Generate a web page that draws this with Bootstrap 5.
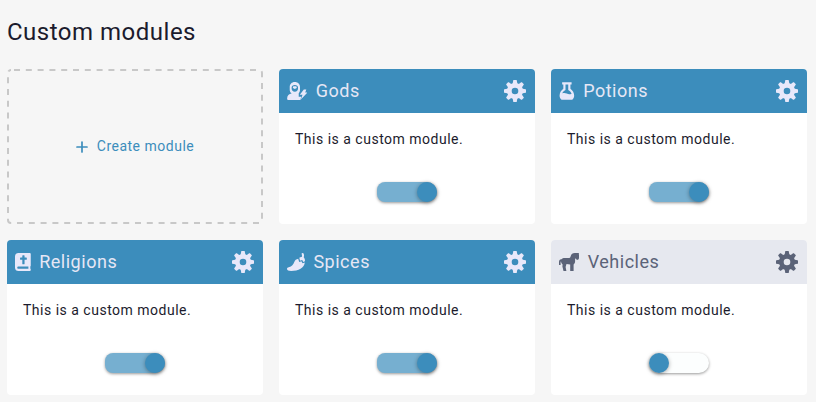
<!DOCTYPE html>
<html lang="en">
<head>
<meta charset="utf-8">
<meta name="viewport" content="width=device-width, initial-scale=1">
<title>Custom modules</title>
<link href="https://cdn.jsdelivr.net/npm/bootstrap@5.3.0/dist/css/bootstrap.min.css" rel="stylesheet">
<style>
body{background:#f6f6f6;color:#1b1b2d;font-family:Roboto,"Liberation Sans",sans-serif;font-size:14px;letter-spacing:.5px;overflow:hidden}
.page{padding:14px 9px 0 7px}
.title{font-size:24px;line-height:36px;letter-spacing:.5px;font-weight:400;margin-bottom:19px}
.modules{display:grid;grid-template-columns:repeat(3,256px);grid-auto-rows:155px;gap:16px}
.create{color:#3c8dbc;border-radius:4px;position:relative}
.create:hover{color:#2f78a3}
.create .outline{position:absolute;inset:0;width:256px;height:155px}
.create .plus{margin-right:9px}
.module{border-radius:4px;border:0;background:#fff;color:inherit;overflow:hidden}
.module-head{height:44px;background:#3c8dbc;color:#e6e7f5;padding:0 8px;font-size:18px}
.module-head h2{font-size:18px;line-height:24px;font-weight:400;letter-spacing:.52px;margin:0 0 0 .4px}
.module-head svg{fill:#e8e8fa;height:18px;flex:none}
.module-head svg.cog{width:24px;height:24px}
.module.off .module-head{background:#e6e8ef;color:#5b6378}
.module.off svg{fill:#5b6378}
.module-text{line-height:21px;padding:16px 16px 0;margin-bottom:32px}
.toggle{width:60px;height:20px;border-radius:8px 10px 10px 8px;background:#76afd0;box-shadow:0 1px 3px rgba(0,0,0,.4);border:0;padding:0}
.knob{width:20px;height:20px;border-radius:50%;background:#3c8dbc;box-shadow:0 1px 4px rgba(0,0,0,.35)}
.off .toggle{background:#fcfefe;border-radius:10px}
</style>
</head>
<body>
<svg class="d-none">
<symbol id="cog" viewBox="0 0 24 24">
<path fill-rule="evenodd" d="M12 4a8 8 0 1 0 0 16 8 8 0 0 0 0-16zM12 8.700a3.300 3.300 0 1 1 0 6.600 3.300 3.300 0 0 1 0-6.600z"/>
<g id="teeth"><path id="tooth" d="M9.500 5.500 10.200 1.500q.1-.5.600-.5h2.400q.5 0 .6.500l.7 4z"/><use href="#tooth" transform="rotate(45 12 12)"/><use href="#tooth" transform="rotate(90 12 12)"/><use href="#tooth" transform="rotate(135 12 12)"/></g>
<use href="#teeth" transform="rotate(180 12 12)"/>
</symbol>
</svg>
<main class="page">
<h1 class="title">Custom modules</h1>
<div class="modules">
  <a href="#" class="create d-flex align-items-center justify-content-center text-decoration-none">
    <svg class="outline" viewBox="0 0 256 155"><rect x="1" y="1" width="254" height="153" rx="3" fill="none" stroke="#c8c8c8" stroke-width="2" stroke-dasharray="6 5.8" stroke-dashoffset="-3"/></svg>
    <svg class="plus" width="12" height="12" viewBox="0 0 12 12" fill="none" stroke="#3c8dbc" stroke-width="1.7" stroke-linecap="round"><path d="M6 1v10M1 6h10"/></svg>
    <span>Create module</span>
  </a>
  <section class="card module">
    <header class="module-head d-flex align-items-center gap-2">
      <svg width="20.25" viewBox="0 0 20 18"><path fill-rule="evenodd" d="M7.700 0C4.500 0 2.600 2.200 2.600 5.200v2.500c0 1.700.7 2.900 1.900 3.800C1.900 11.800 0 13.800 0 16.400c0 .9.600 1.600 1.500 1.600h11.800l.8-3.200h-2.500v-3.600c.8-.9 1.300-2 1.300-3.500V5.200c0-3-2-5.200-5.200-5.200zM4.500 5.600C4.500 4 5.700 3 7.700 3s3.200 1 3.200 2.600v.7c0 2.200-1.200 3.400-3.200 3.400S4.500 8.500 4.500 6.300zM5.800 5.100c0-.5.4-.8.9-.8h2c.5 0 .9.300.9.800v1l-1.900.8-1.900-.8z"/><path d="M16.700 7.500h2.500l-1.100 3h2.200l-6.600 6.900 1.700-4.700h-2.700z"/></svg>
      <h2>Gods</h2><svg class="cog ms-auto"><use href="#cog"/></svg>
    </header>
    <p class="module-text">This is a custom module.</p>
    <button class="toggle d-flex justify-content-end mx-auto" aria-label="Gods enabled"><span class="knob"></span></button>
  </section>
  <section class="card module">
    <header class="module-head d-flex align-items-center gap-2">
      <svg width="15.75" viewBox="0 0 16 18"><path fill-rule="evenodd" d="M3.200 0h9.600v2.300h-1.200v4.300c2.400 1.800 3.800 4.300 3.800 7.100 0 1.700-.8 3.200-2 4.300H2.600c-1.200-1.100-2-2.600-2-4.300 0-2.800 1.400-5.300 3.800-7.100V2.300H3.200zM6.600 2.300v5.600c-1.700.8-2.800 2-3.400 3.500 1.600-.6 3.100-.6 4.700.2 1.700.8 3.200.8 4.900.1-.7-1.600-1.800-3-3.400-3.800V2.300z"/></svg>
      <h2>Potions</h2><svg class="cog ms-auto"><use href="#cog"/></svg>
    </header>
    <p class="module-text">This is a custom module.</p>
    <button class="toggle d-flex justify-content-end mx-auto" aria-label="Potions enabled"><span class="knob"></span></button>
  </section>
  <section class="card module">
    <header class="module-head d-flex align-items-center gap-2">
      <svg width="15.75" viewBox="0 0 448 512"><path d="M448 358.400V25.600c0-16-9.600-25.600-25.600-25.600H96C41.600 0 0 41.600 0 96v320c0 54.400 41.600 96 96 96h326.400c12.800 0 25.600-9.600 25.600-25.600v-16c0-6.400-3.200-12.800-9.600-19.200-3.200-16-3.200-60.800 0-73.600 6.400-3.200 9.600-9.600 9.600-19.200zM144 144c0-8.840 7.160-16 16-16h48V80c0-8.840 7.160-16 16-16h32c8.840 0 16 7.160 16 16v48h48c8.840 0 16 7.160 16 16v32c0 8.840-7.160 16-16 16h-48v112c0 8.840-7.160 16-16 16h-32c-8.840 0-16-7.160-16-16V192h-48c-8.840 0-16-7.160-16-16v-32zm236.800 304H96c-19.200 0-32-12.800-32-32s16-32 32-32h284.800v64z"/></svg>
      <h2>Religions</h2><svg class="cog ms-auto"><use href="#cog"/></svg>
    </header>
    <p class="module-text">This is a custom module.</p>
    <button class="toggle d-flex justify-content-end mx-auto" aria-label="Religions enabled"><span class="knob"></span></button>
  </section>
  <section class="card module">
    <header class="module-head d-flex align-items-center gap-2">
      <svg width="18" viewBox="0 0 18 18"><path d="M11.200 5.800 12.200 9.100l2.300-.8 1 2 2.300-.8C17.500 14.600 11.300 18 4.200 18 1.500 18 0 17.300 0 16c0-.9.700-1.500 1.700-1.700 3.300-.8 4.600-2.700 5.600-5.200.7-1.900 1.900-3 3.900-3.300zM14.500.8c.4-.8 1.400-1 2-.2.7 1.100.7 2.500.2 3.600 1 .9 1.400 2.300 1.200 4.100l-1.700.6-1-2-2.200.8-.7-2.900c.8-.7 1.700-.9 2.400-.8.4-1.100.4-1.900-.2-3.200z"/></svg>
      <h2>Spices</h2><svg class="cog ms-auto"><use href="#cog"/></svg>
    </header>
    <p class="module-text">This is a custom module.</p>
    <button class="toggle d-flex justify-content-end mx-auto" aria-label="Spices enabled"><span class="knob"></span></button>
  </section>
  <section class="card module off">
    <header class="module-head d-flex align-items-center gap-2">
      <svg width="20.25" viewBox="0 0 20.250 18"><path d="M20.200 1.900 19.600.9l.5-.9h-4.300c-2.400 0-3.700 1.400-4.200 3.400-.3 1.100-.9 1.600-2.100 1.600H5.700c-1.400 0-2.500.5-3.200 1.300C.9 6.200 0 7.400 0 9v3h1.600V9l.4-.8c.1 1.400.6 2.400 1.600 3.300l-.2 2.100L4.500 18h2.900l-.8-3.900.9-3 3.700.4V18h3.400v-6.500c1-.9 1.500-2 1.500-3.300V5.500l.9.300.9 1.300 1.500-.5.700-1.600z"/></svg>
      <h2>Vehicles</h2><svg class="cog ms-auto"><use href="#cog"/></svg>
    </header>
    <p class="module-text">This is a custom module.</p>
    <button class="toggle d-flex justify-content-start mx-auto" aria-label="Vehicles disabled"><span class="knob"></span></button>
  </section>
</div>
</main>
<script src="https://cdn.jsdelivr.net/npm/bootstrap@5.3.0/dist/js/bootstrap.bundle.min.js"></script>
</body>
</html>
